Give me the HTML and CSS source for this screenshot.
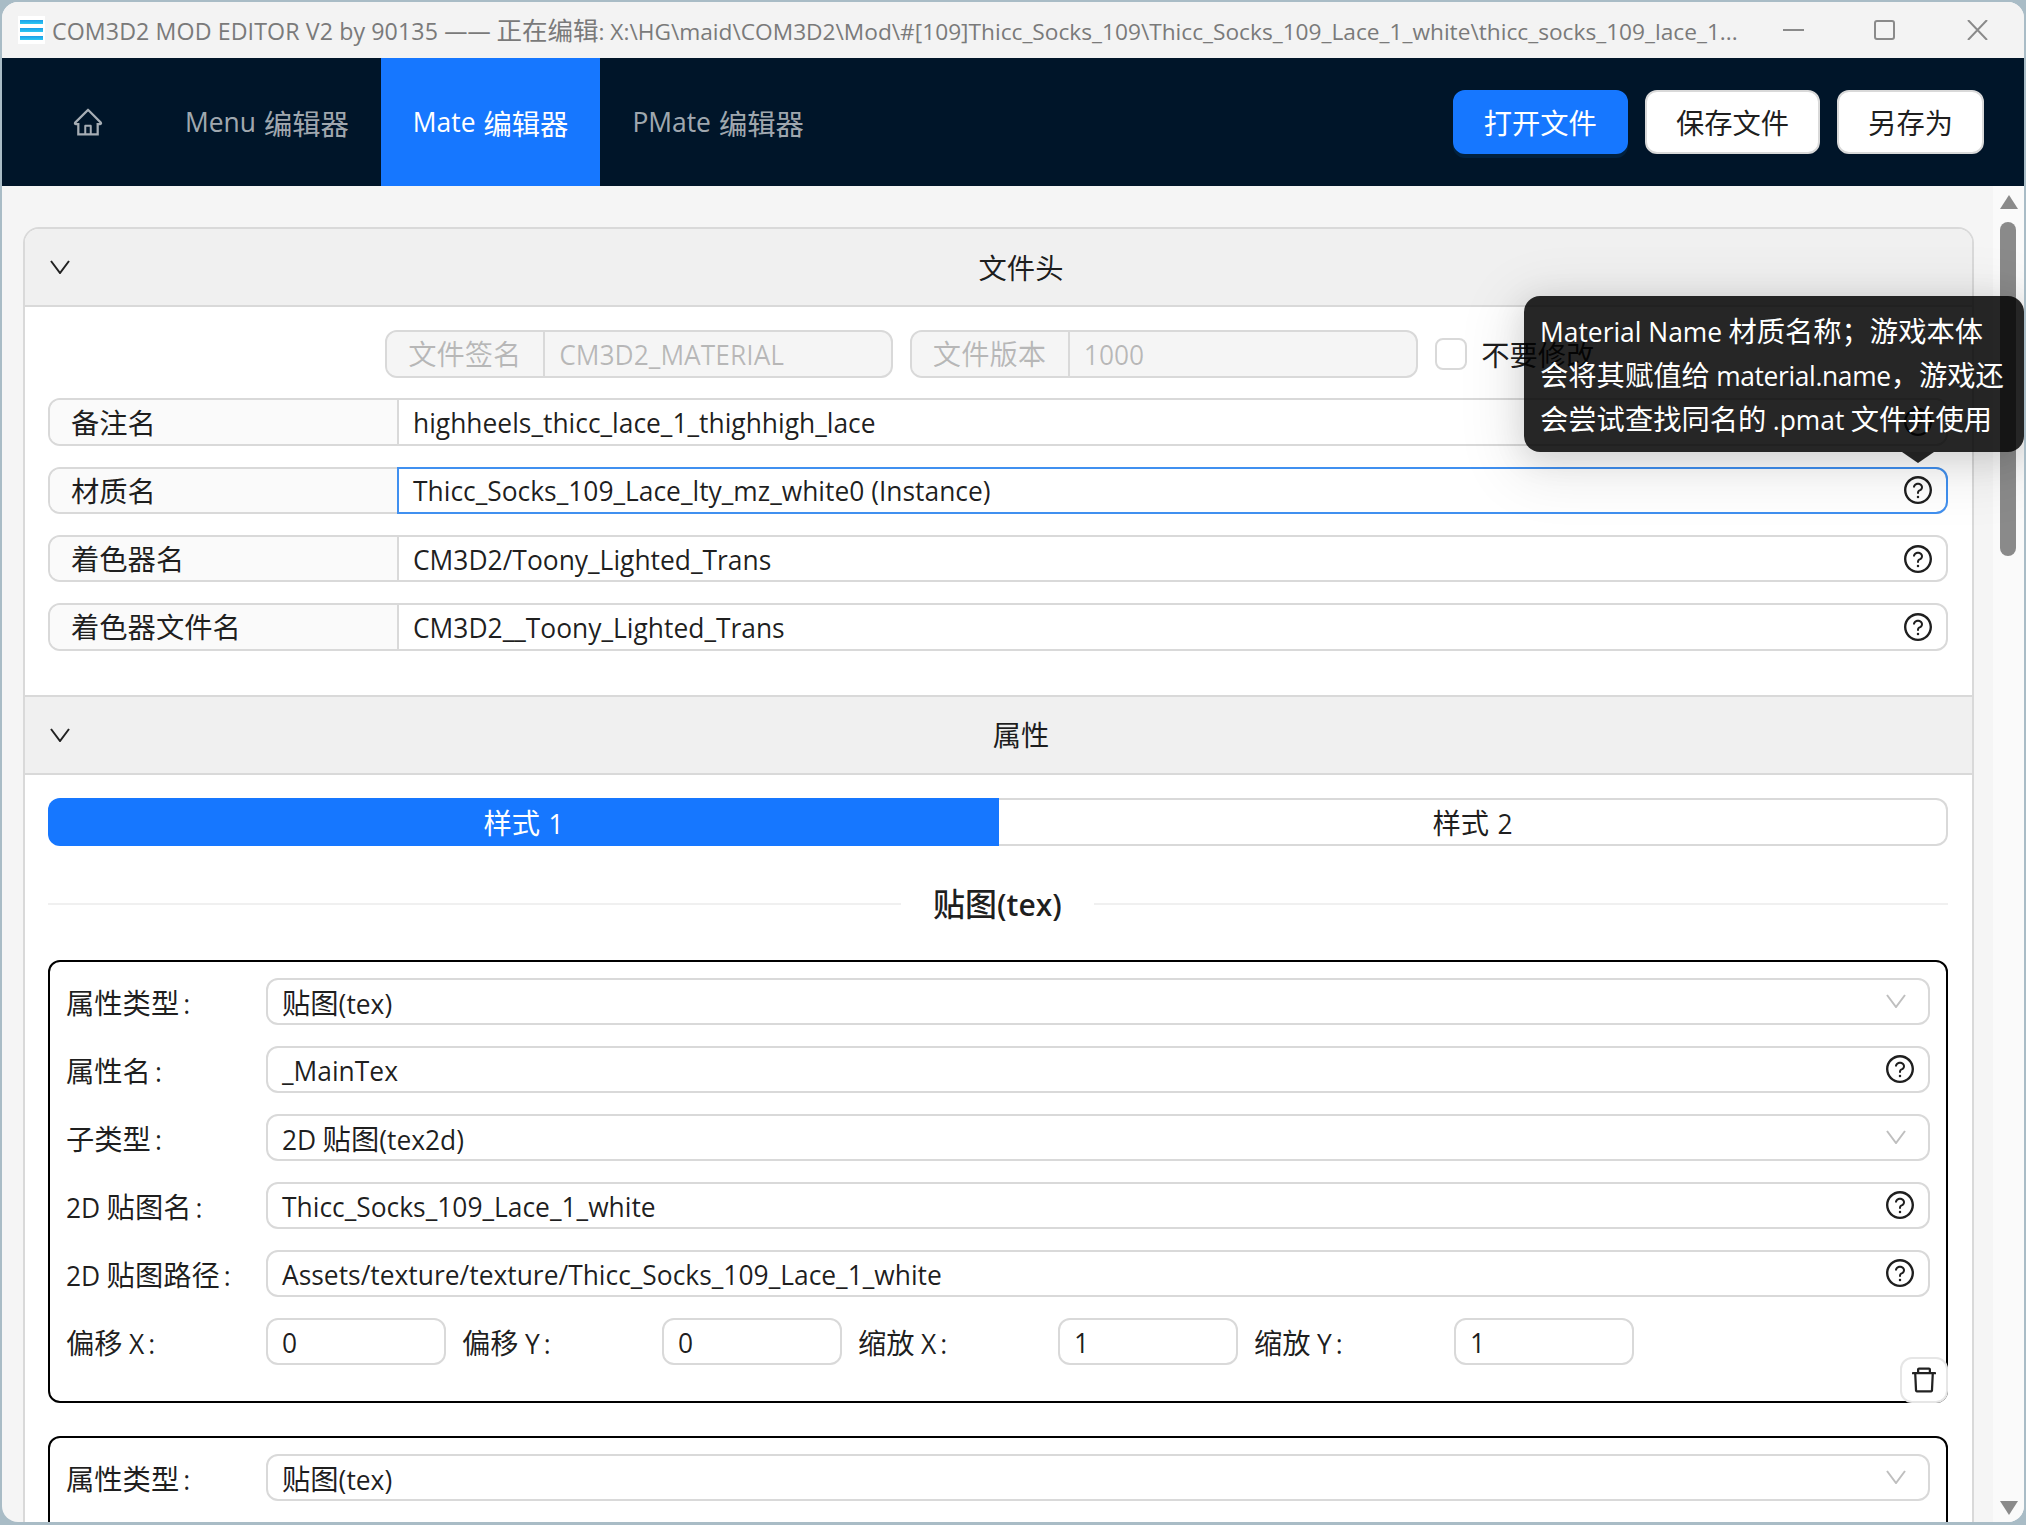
FILE: index.html
```html
<!DOCTYPE html>
<html lang="zh">
<head>
<meta charset="utf-8">
<title>COM3D2 MOD EDITOR V2</title>
<link rel="stylesheet" href="styles.css">
</head>
<body>
<div class="window">
  <header class="titlebar">
    <span class="app-icon"><i></i><i></i><i></i></span>
    <span class="title"><span class="en app-name">COM3D2 MOD EDITOR V2 by 90135 ——</span> 正在编辑<span class="en">: X:\HG\maid\COM3D2\Mod\#[109]Thicc_Socks_109\Thicc_Socks_109_Lace_1_white\thicc_socks_109_lace_1...</span></span>
    <svg class="win-btn win-min" viewBox="0 0 21 20"><path d="M0 10h21"/></svg>
    <svg class="win-btn win-max" viewBox="0 0 21 20"><rect x="1" y="1" width="19" height="18" rx="2"/></svg>
    <svg class="win-btn win-close" viewBox="0 0 21 20"><path d="M1 0l19 20M20 0L1 20"/></svg>
  </header>
  <nav class="nav">
    <a class="nav-item nav-home"><svg class="home-icon" viewBox="0 0 1024 1024"><path d="M946.5 505L560.1 118.8l-25.9-25.9a31.5 31.5 0 0 0-44.4 0L77.5 505a63.9 63.9 0 0 0-18.8 46c.4 35.2 29.7 63.3 64.9 63.3h42.5V940h691.8V614.3h43.4c17.1 0 33.2-6.7 45.3-18.8a63.6 63.6 0 0 0 18.7-45.3c0-17-6.7-33.1-18.8-45.2zM568 868H456V664h112v204zm217.9-325.7V868H632V640c0-22.1-17.9-40-40-40H432c-22.1 0-40 17.9-40 40v228H238.1V542.3h-96l370-369.7 23.1 23.1L882 542.3h-96.1z"/></svg></a>
    <a class="nav-item"><span class="en">Menu</span> 编辑器</a>
    <a class="nav-item active"><span class="en">Mate</span> 编辑器</a>
    <a class="nav-item"><span class="en">PMate</span> 编辑器</a>
    <div class="nav-actions">
      <button class="btn primary">打开文件</button>
      <button class="btn">保存文件</button>
      <button class="btn">另存为</button>
    </div>
  </nav>
  <div class="body">
    <main class="content">
      <section class="collapse">
        <div class="collapse-head first">
          <svg class="caret" viewBox="0 0 20 14"><path d="M1 1l9 12 9-12"/></svg>
          <span class="head-text">文件头</span>
        </div>
        <div class="panel panel-file">
          <div class="sig-row">
            <div class="group disabled sig"><span class="addon addon-sig">文件签名</span><span class="value en">CM3D2_MATERIAL</span></div>
            <div class="group disabled sig"><span class="addon addon-sig">文件版本</span><span class="value en">1000</span></div>
            <span class="checkbox"></span>
            <span class="check-label">不要修改</span>
          </div>
          <div class="group"><span class="addon addon-wide">备注名</span><span class="value en">highheels_thicc_lace_1_thighhigh_lace<svg class="q" viewBox="0 0 1024 1024"><use href="#q-icon"/></svg></span></div>
          <div class="group"><span class="addon addon-wide">材质名</span><span class="value en focused">Thicc_Socks_109_Lace_lty_mz_white0 (Instance)<svg class="q" viewBox="0 0 1024 1024"><use href="#q-icon"/></svg></span></div>
          <div class="group"><span class="addon addon-wide">着色器名</span><span class="value en">CM3D2/Toony_Lighted_Trans<svg class="q" viewBox="0 0 1024 1024"><use href="#q-icon"/></svg></span></div>
          <div class="group"><span class="addon addon-wide">着色器文件名</span><span class="value en">CM3D2__Toony_Lighted_Trans<svg class="q" viewBox="0 0 1024 1024"><use href="#q-icon"/></svg></span></div>
        </div>
        <div class="collapse-head">
          <svg class="caret" viewBox="0 0 20 14"><path d="M1 1l9 12 9-12"/></svg>
          <span class="head-text">属性</span>
        </div>
        <div class="panel panel-props">
          <div class="tabs">
            <span class="tab on"><span>样式 <span class="en">1</span></span></span>
            <span class="tab off"><span>样式 <span class="en">2</span></span></span>
          </div>
          <div class="divider"><span class="divider-text">贴图<span class="en">(tex)</span></span></div>
          <div class="prop-card">
            <div class="prop-row"><span class="prop-label">属性类型<span class="en colon">:</span></span><span class="field"><span>贴图<span class="en">(tex)</span></span><svg class="sel" viewBox="0 0 20 14"><path d="M1 1l9 12 9-12"/></svg></span></div>
            <div class="prop-row"><span class="prop-label">属性名<span class="en colon">:</span></span><span class="field en">_MainTex<svg class="q" viewBox="0 0 1024 1024"><use href="#q-icon"/></svg></span></div>
            <div class="prop-row"><span class="prop-label">子类型<span class="en colon">:</span></span><span class="field"><span><span class="en">2D</span> 贴图<span class="en">(tex2d)</span></span><svg class="sel" viewBox="0 0 20 14"><path d="M1 1l9 12 9-12"/></svg></span></div>
            <div class="prop-row"><span class="prop-label"><span class="en">2D</span> 贴图名<span class="en colon">:</span></span><span class="field en">Thicc_Socks_109_Lace_1_white<svg class="q" viewBox="0 0 1024 1024"><use href="#q-icon"/></svg></span></div>
            <div class="prop-row"><span class="prop-label"><span class="en">2D</span> 贴图路径<span class="en colon">:</span></span><span class="field en">Assets/texture/texture/Thicc_Socks_109_Lace_1_white<svg class="q" viewBox="0 0 1024 1024"><use href="#q-icon"/></svg></span></div>
            <div class="num-row">
              <div class="num-cell"><span class="prop-label">偏移 <span class="en">X</span><span class="en colon">:</span></span><span class="field num en">0</span></div>
              <div class="num-cell"><span class="prop-label">偏移 <span class="en">Y</span><span class="en colon">:</span></span><span class="field num en">0</span></div>
              <div class="num-cell"><span class="prop-label">缩放 <span class="en">X</span><span class="en colon">:</span></span><span class="field num en">1</span></div>
              <div class="num-cell"><span class="prop-label">缩放 <span class="en">Y</span><span class="en colon">:</span></span><span class="field num en">1</span></div>
            </div>
            <button class="del-btn"><svg viewBox="0 0 1024 1024"><path d="M360 184h-8c4.4 0 8-3.6 8-8v8h304v-8c0 4.4 3.6 8 8 8h-8v72h72v-80c0-35.3-28.7-64-64-64H352c-35.3 0-64 28.7-64 64v80h72v-72zm504 72H160c-17.7 0-32 14.3-32 32v32c0 4.4 3.6 8 8 8h60.4l24.7 523c1.6 34.1 29.8 61 63.9 61h454c34.2 0 62.3-26.8 63.9-61l24.7-523H888c4.4 0 8-3.6 8-8v-32c0-17.7-14.3-32-32-32zM731.3 840H292.7l-24.2-512h487l-24.2 512z"/></svg></button>
          </div>
          <div class="prop-card">
            <div class="prop-row"><span class="prop-label">属性类型<span class="en colon">:</span></span><span class="field"><span>贴图<span class="en">(tex)</span></span><svg class="sel" viewBox="0 0 20 14"><path d="M1 1l9 12 9-12"/></svg></span></div>
          </div>
        </div>
      </section>
    </main>
    <aside class="scrollbar">
      <span class="arrow up"></span>
      <span class="thumb"></span>
      <span class="arrow down"></span>
    </aside>
  </div>
  <div class="tooltip"><span class="en">Material Name</span> 材质名称；游戏本体<br>会将其赋值给 <span class="en tight">material.name</span>，游戏还<br>会尝试查找同名的 <span class="en">.pmat</span> 文件并使用<i class="tip-arrow"></i></div>
</div>
<svg class="defs" width="0" height="0"><defs><g id="q-icon"><path d="M512 64C264.6 64 64 264.6 64 512s200.6 448 448 448 448-200.6 448-448S759.4 64 512 64zm0 820c-205.4 0-372-166.6-372-372s166.6-372 372-372 372 166.6 372 372-166.6 372-372 372z"/><path d="M623.6 316.7C593.6 290.4 554 276 512 276s-81.6 14.5-111.6 40.7C369.2 344 352 380.7 352 420v7.6c0 4.4 3.6 8 8 8h48c4.4 0 8-3.6 8-8V420c0-44.1 43.1-80 96-80s96 35.9 96 80c0 31.1-22 59.6-56.1 72.7-21.2 8.1-39.2 22.3-52.1 40.9-13.1 19-19.9 41.8-19.9 64.9V620c0 4.4 3.6 8 8 8h48c4.4 0 8-3.6 8-8v-22.7a48.3 48.3 0 0 1 30.9-44.8c59-22.7 97.1-74.7 97.1-132.5.1-39.3-17.1-76-48.3-103.3zM472 732a40 40 0 1 0 80 0 40 40 0 1 0-80 0z"/></g></defs></svg>
</body>
</html>
```
FILE: styles.css
```css
* { box-sizing: border-box; }
html, body { height: 100%; }
body {
  margin: 0;
  background: #a9bcc6;
  overflow: hidden;
  font-family: "Noto Sans CJK SC", "Open Sans", sans-serif;
  font-size: 28.3px;
  color: rgba(0, 0, 0, 0.88);
}
.en { font-family: "Open Sans", "Noto Sans CJK SC", sans-serif; font-size: 26.4px; }
.defs { position: absolute; }
.window {
  position: relative;
  margin: 2px 0 0 2px;
  width: 2022px;
  height: 1520px;
  border-radius: 16px;
  overflow: hidden;
  display: flex;
  flex-direction: column;
  background: #f5f5f5;
}
.titlebar {
  height: 56px;
  flex: none;
  display: flex;
  align-items: center;
  background: #f3f3f3;
  color: #7a7a7a;
}
.app-icon {
  margin-left: 16px;
  width: 27px;
  padding: 4px 2px;
  background: #fff;
  display: flex;
  flex-direction: column;
  gap: 4px;
}
.app-icon i { height: 4px; background: linear-gradient(180deg, #1a9ee8, #2cc8f2); display: block; }
.title { margin-left: 7px; width: 1690px; white-space: nowrap; overflow: hidden; font-size: 25.5px; line-height: 36px; }
.title .en { font-size: 22.7px; }
.title .app-name { font-size: 23.2px; letter-spacing: 0.1px; }
.win-btn { flex: none; width: 21px; height: 20px; fill: none; stroke: #8a8a8a; stroke-width: 2; }
.win-min { margin-left: 41px; }
.win-max { margin-left: 70px; }
.win-close { margin-left: 72px; }
.nav {
  height: 128px;
  flex: none;
  display: flex;
  align-items: stretch;
  background: #001529;
  padding-right: 40px;
}
.nav-item {
  padding: 0 32px;
  display: flex;
  align-items: center;
  gap: 8px;
  color: rgba(255, 255, 255, 0.65);
  white-space: nowrap;
}
.nav-item.active { background: #1677ff; color: #fff; }
.nav-home { width: 151px; padding: 0 0 0 70px; }
.home-icon { width: 32px; height: 32px; fill: currentColor; }
.nav-actions { margin-left: auto; display: flex; align-items: center; gap: 17px; }
.btn {
  height: 64px;
  padding: 0 29px 2px;
  border: 2px solid #d9d9d9;
  border-radius: 12px;
  background: #fff;
  font: inherit;
  color: rgba(0, 0, 0, 0.88);
  box-shadow: 0 4px 0 rgba(0, 0, 0, 0.02);
}
.btn.primary { background: #1677ff; border-color: #1677ff; color: #fff; box-shadow: 0 4px 0 rgba(5, 145, 255, 0.1); }
.body { flex: 1; min-height: 0; display: flex; }
.content { flex: 1; min-width: 0; overflow: hidden; padding: 41px 19px 0 21px; }
.scrollbar {
  flex: none;
  width: 31px;
  background: #fafafa;
  display: flex;
  flex-direction: column;
  align-items: flex-start;
  padding: 9px 0 7px 7px;
}
.thumb { width: 16px; height: 334px; margin-top: 13px; background: #8a8a8a; border-radius: 8px; }
.arrow { width: 0; height: 0; border-left: 9px solid transparent; border-right: 9px solid transparent; }
.arrow.up { border-bottom: 14px solid #8a8a8a; }
.arrow.down { border-top: 14px solid #8a8a8a; margin-top: auto; }
.collapse {
  border: 2px solid #d9d9d9;
  border-bottom: 0;
  border-radius: 16px 16px 0 0;
  background: #fff;
}
.collapse-head {
  height: 80px;
  display: flex;
  align-items: center;
  padding: 0 0 0 25px;
  background: #f0f0f0;
  border-top: 2px solid #d9d9d9;
  border-bottom: 2px solid #d9d9d9;
}
.collapse-head.first { border-top: 0; height: 78px; border-radius: 14px 14px 0 0; }
.caret { width: 20px; height: 14px; fill: none; stroke: #222; stroke-width: 2; flex: none; }
.head-text { flex: 1; text-align: center; color: rgba(0, 0, 0, 0.88); padding-bottom: 2px; }
.panel { padding: 23px 24px 0 23px; }
.panel-file { display: flex; flex-direction: column; gap: 20.75px; padding-bottom: 44px; }
.sig-row { display: flex; align-items: center; justify-content: flex-end; padding-right: 353.6px; height: 47.5px; }
.group {
  height: 47.5px;
  display: flex;
  border: 2px solid #d9d9d9;
  border-radius: 12px;
  background: #fff;
}
.group.sig { width: 508px; margin-right: 16.7px; }
.group.disabled { background: #f5f5f5; color: rgba(0, 0, 0, 0.25); }
.group.disabled .addon { color: rgba(0, 0, 0, 0.25); background: #f5f5f5; }
.addon {
  flex: none;
  display: flex;
  align-items: center;
  padding: 0 0 2px 21px;
  background: #fafafa;
  border-right: 2px solid #d9d9d9;
  border-radius: 10px 0 0 10px;
  white-space: nowrap;
}
.addon-sig { width: 158px; }
.addon-wide { width: 349px; }
.value {
  flex: 1;
  display: flex;
  align-items: center;
  justify-content: space-between;
  padding: 2px 12px 0 14px;
  white-space: nowrap;
}
.value > .q { margin-top: -2px; }
.focused {
  margin: -2px;
  border: 2px solid #4090f0;
  border-radius: 0 12px 12px 0;
}
.q { width: 32px; height: 32px; fill: #1f1f1f; flex: none; }
.checkbox { width: 32px; height: 32px; border: 2px solid #d9d9d9; border-radius: 8px; margin-right: 14.7px; background: #fff; }
.check-label { white-space: nowrap; }
.tabs { display: flex; height: 48px; }
.tab { flex: 1; display: flex; align-items: center; justify-content: center; white-space: nowrap; }
.tab .en { margin-left: 2px; }
.tab.on { flex: none; width: 951px; background: #1677ff; color: #fff; border-radius: 12px 0 0 12px; }
.tab.off { border: 2px solid #d9d9d9; border-left: 0; border-radius: 0 12px 12px 0; }
.divider { display: flex; align-items: center; gap: 32px; margin: 36px 0 34px; height: 44px; }
.divider::before, .divider::after { content: ""; height: 2px; background: #f0f0f0; flex: 1; }
.divider::before { flex: none; width: 853px; }
.divider-text { font-weight: 500; font-size: 32px; line-height: 44px; white-space: nowrap; }
.divider-text .en { font-weight: 600; font-size: 30px; }
.prop-card {
  position: relative;
  border: 2px solid #000;
  border-radius: 12px;
  padding: 16px 16px 36px 16px;
  margin-bottom: 33px;
}
.prop-row, .num-row { display: flex; align-items: center; height: 47px; margin-bottom: 21px; }
.num-row { margin-bottom: 0; gap: 16px; }
.num-cell { display: flex; align-items: center; width: 380px; }
.prop-label { flex: none; width: 200px; white-space: nowrap; padding-top: 1px; }
.colon { margin-left: 4px; }
.field {
  flex: 1;
  height: 47px;
  display: flex;
  align-items: center;
  padding: 1px 0 0 14px;
  border: 2px solid #d9d9d9;
  border-radius: 12px;
  white-space: nowrap;
}
.field.en { padding-top: 3px; }
.field > .q { margin: -3px 12px 0 auto; }
.sel { width: 20px; height: 14px; fill: none; stroke: #bfbfbf; stroke-width: 2; margin: -1px 22px 0 auto; flex: none; }
.del-btn {
  position: absolute;
  right: -2px;
  bottom: -2px;
  width: 48px;
  height: 46px;
  padding: 0;
  border: 2px solid #e6e6e6;
  border-radius: 12px;
  background: #fff;
  display: flex;
  align-items: center;
  justify-content: center;
}
.del-btn svg { width: 32px; height: 32px; fill: #222; }
.tooltip {
  position: absolute;
  left: 1522px;
  top: 294px;
  width: 500px;
  height: 156px;
  padding: 12px 16px;
  background: rgba(0, 0, 0, 0.85);
  color: #fff;
  border-radius: 16px;
  line-height: 44px;
  white-space: nowrap;
  box-shadow: 0 12px 56px 16px rgba(0, 0, 0, 0.08), 0 6px 32px rgba(0, 0, 0, 0.12);
}
.tooltip .en { line-height: 1; }
.tooltip .tight { letter-spacing: -0.35px; }
.tip-arrow {
  position: absolute;
  left: 378px;
  bottom: -11px;
  width: 0;
  height: 0;
  border-left: 16px solid transparent;
  border-right: 16px solid transparent;
  border-top: 11px solid rgba(0, 0, 0, 0.85);
}
```
